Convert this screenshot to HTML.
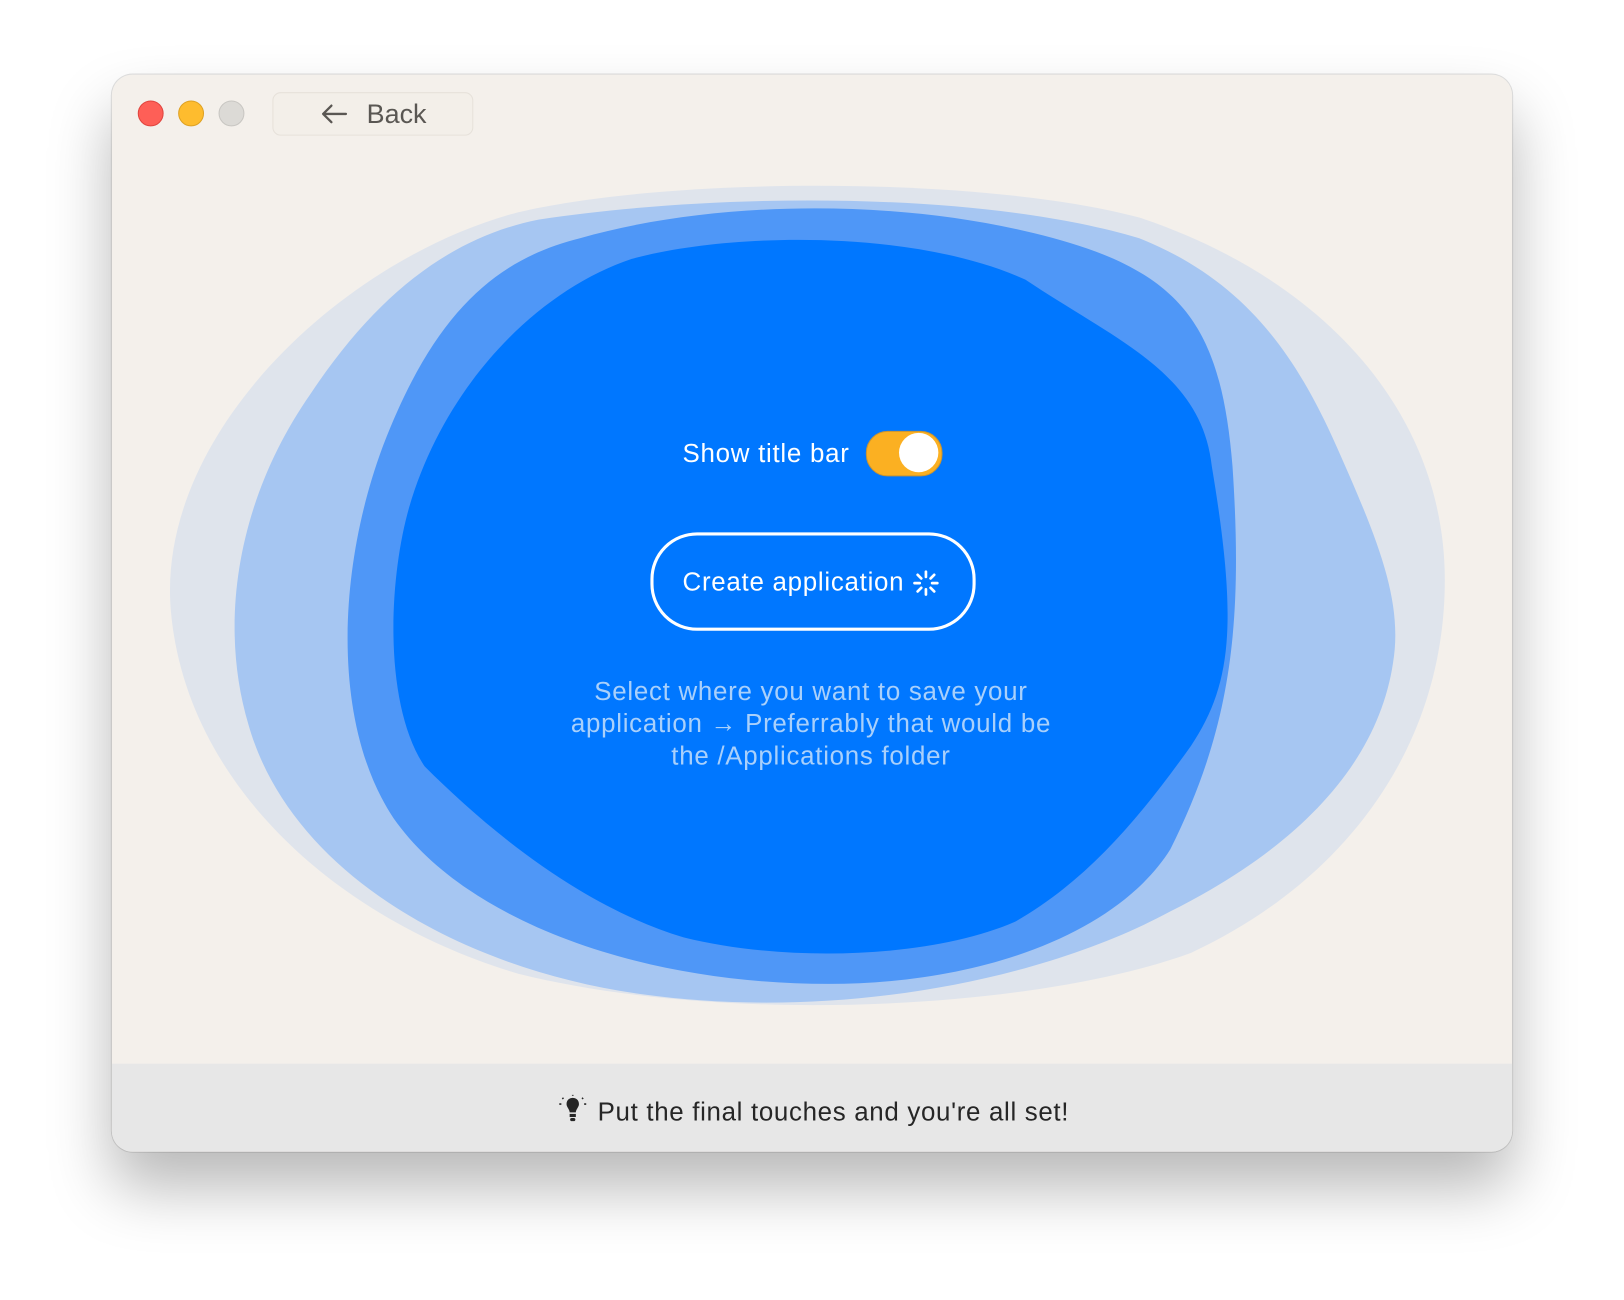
<!DOCTYPE html>
<html><head><meta charset="utf-8"><style>
html,body{margin:0;padding:0;width:1624px;height:1300px;overflow:hidden;background:#fff;font-family:"Liberation Sans",sans-serif}
#s{position:absolute;left:0;top:0;width:1568px;height:1255px;transform:scale(1.03571);transform-origin:0 0}
.win{position:absolute;left:108px;top:72px;width:1352px;height:1040px;border-radius:20px;background:#f4f0eb;overflow:hidden;box-shadow:0 35px 60px rgba(0,0,0,0.28),0 0 0 1px rgba(0,0,0,0.12)}
.dot{position:absolute;top:25px;width:23px;height:23px;border-radius:50%}
.back{position:absolute;left:155px;top:17px;width:192px;height:40px;border-radius:8px;border:1px solid #e6e1da;background:#f3efe9;color:#5a5753;font-size:26px;line-height:40px}
.footer{position:absolute;left:0;top:955px;width:1352px;height:85px;background:#e7e7e7;color:#262626;font-size:25px;letter-spacing:0.65px}
.t{position:absolute;color:#fff;font-size:25px;white-space:nowrap;letter-spacing:0.7px}
</style></head><body><div id="s">
<div class="win">
<svg style="position:absolute;left:-108px;top:-72px" width="1568" height="1255">
<path fill="#dfe4ec" d="M500,205 C650,170 950,170 1100,210 C1280,270 1395,400 1395,560 C1395,720 1300,850 1150,920 C1000,975 700,990 500,940 C330,890 180,760 165,590 C150,420 330,250 500,205 Z"/>
<path fill="#a6c6f2" d="M520,212 C700,185 950,185 1100,230 C1200,270 1250,340 1290,430 C1330,520 1355,580 1345,640 C1330,740 1250,820 1130,880 C1000,950 800,985 620,960 C440,935 280,840 240,700 C210,600 230,480 300,380 C360,290 430,230 520,212 Z"/>
<path fill="#4f97f7" d="M560,230 C700,190 900,190 1050,240 C1150,275 1180,330 1190,450 C1200,600 1190,700 1130,820 C1080,900 950,950 800,950 C620,950 450,890 380,790 C320,700 325,550 370,430 C420,300 480,250 560,230 Z"/>
<path fill="#0077ff" d="M610,250 C700,225 880,220 990,270 C1080,330 1160,360 1170,450 C1195,600 1190,660 1150,720 C1100,790 1050,850 980,890 C900,925 760,930 660,905 C560,875 470,800 410,740 C370,680 375,560 395,490 C430,370 520,280 610,250 Z"/>
</svg>
<div class="dot" style="left:25px;background:#fe5f57;border:0.5px solid #e0443e"></div>
<div class="dot" style="left:64px;background:#febc2e;border:0.5px solid #dea123"></div>
<div class="dot" style="left:103px;background:#dcdad6;border:0.5px solid #c8c6c2"></div>
<div class="back"><svg style="position:absolute;left:45px;top:9px" width="28" height="22" viewBox="0 0 28 22"><path d="M25 11H3M11 3L3 11L11 19" fill="none" stroke="#5a5753" stroke-width="2.2" stroke-linecap="round" stroke-linejoin="round"/></svg><span style="position:absolute;left:90px">Back</span></div>
<div class="t" style="left:551px;top:352px">Show title bar</div>
<div style="position:absolute;left:728px;top:344px;width:72px;height:42px;border-radius:21px;background:#fbb022;border:1px solid #c79434"></div>
<div style="position:absolute;left:760px;top:346px;width:38px;height:38px;border-radius:50%;background:#fff"></div>
<div style="position:absolute;left:520px;top:442px;width:308px;height:89px;border:3px solid #fff;border-radius:45px"></div>
<div class="t" style="left:551px;top:476px">Create application</div>
<svg style="position:absolute;left:772px;top:477px" width="28" height="28" viewBox="0 0 28 28" stroke="#fff" stroke-width="2.6" stroke-linecap="round"><path d="M14 3V8M14 20V25M3 14H8M20 14H25M6 6L9.5 9.5M18.5 18.5L22 22M22 6L18.5 9.5M9.5 18.5L6 22"/></svg>
<div style="position:absolute;left:370px;top:581px;width:610px;text-align:center;color:#a9d0fb;font-size:25px;line-height:31px;letter-spacing:0.7px">Select where you want to save your<br>application <b>→</b> Preferrably that would be<br>the /Applications folder</div>
<div class="footer">
<svg style="position:absolute;left:430px;top:30px" width="30" height="30" viewBox="0 0 30 30"><path d="M9 9C9 5 12 3 15 3C18 3 21 5 21 9C21 12 18 14 18 17H12C12 14 9 12 9 9Z" fill="#262626"/><rect x="12" y="18.5" width="6" height="3" fill="#262626"/><rect x="12.5" y="22.5" width="5" height="3" rx="1.5" fill="#262626"/><path d="M15 0V1M5 3L6 4M25 3L24 4M2 9H4M26 9H28" stroke="#262626" stroke-width="1.6"/></svg>
<span style="position:absolute;left:469px;top:33px">Put the final touches and you're all set!</span>
</div>
</div>
</div></body></html>
